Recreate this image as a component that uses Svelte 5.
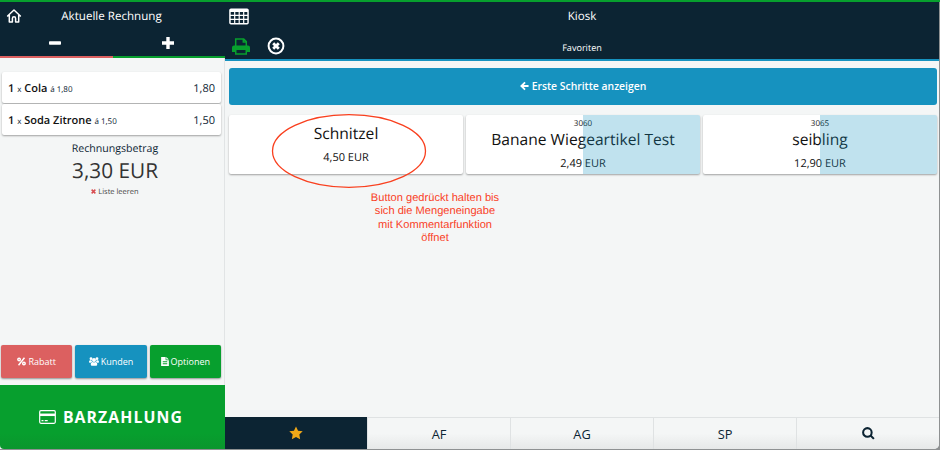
<script lang="ts">
    type Item = { qty: number; name: string; unit: string; total: string };
    type Article = { code?: string; name: string; price: string; weighed: boolean };

    const items: Item[] = [
        { qty: 1, name: "Cola", unit: "1,80", total: "1,80" },
        { qty: 1, name: "Soda Zitrone", unit: "1,50", total: "1,50" },
    ];

    const articles: Article[] = [
        { name: "Schnitzel", price: "4,50 EUR", weighed: false },
        { code: "3060", name: "Banane Wiegeartikel Test", price: "2,49 EUR", weighed: true },
        { code: "3065", name: "seibling", price: "12,90 EUR", weighed: true },
    ];

    const groups = ["AF", "AG", "SP"];
    let active = $state("fav");
</script>

<div class="app">
    <aside>
        <header class="bill-head">
            <div class="title-row">
                <svg class="home" viewBox="0 0 16 16" width="16" height="16">
                    <path d="M1.600 8 8 2l6.400 6M3.300 7v7h3.100v-3.600a1.600 1.600 0 0 1 3.200 0V14h3.100V7" />
                </svg>
                <h1>Aktuelle Rechnung</h1>
            </div>
            <div class="steps">
                <button class="minus" aria-label="Weniger">
                    <svg viewBox="0 0 12 12" width="12" height="12"><rect y="4.200" width="12" height="3.600" rx=".8" /></svg>
                </button>
                <button class="plus" aria-label="Mehr">
                    <svg viewBox="0 0 12 12" width="12" height="12"><path d="M4.300 0h3.400v4.300H12v3.400H7.700V12H4.300V7.700H0V4.300h4.300z" /></svg>
                </button>
            </div>
        </header>

        <ul class="items">
            {#each items as item}
                <li>
                    <span><b>{item.qty}</b> <small>x</small> <b>{item.name}</b> <small>á {item.unit}</small></span>
                    <span class="total">{item.total}</span>
                </li>
            {/each}
        </ul>

        <div class="sum">
            <div class="sum-label">Rechnungsbetrag</div>
            <div class="sum-value">3,30 EUR</div>
            <div class="clear">
                <svg viewBox="0 0 8 8" width="5" height="5"><path d="m1 1 6 6M7 1 1 7" /></svg>
                Liste leeren
            </div>
        </div>

        <div class="actions">
            <button class="red">
                <svg viewBox="0 0 10 10" width="9" height="9">
                    <g fill="none" stroke="#fff" stroke-width="1.6"><circle cx="2.300" cy="2.700" r="1.400" /><circle cx="7.700" cy="7.300" r="1.400" /><path d="M8.300.8 1.700 9.200" /></g>
                </svg>
                Rabatt
            </button>
            <button class="blue">
                <svg viewBox="0 0 20 18" width="10" height="9">
                    <circle cx="4" cy="3.400" r="2.800" /><circle cx="16" cy="3.400" r="2.800" /><circle cx="10" cy="6" r="4" />
                    <path d="M0 10.500C0 8 .8 6.300 2.300 6.300h2.400c.5 1.500 1.200 2.300 2 3-2 .2-2.400 1-3 2H1.500Q0 11.300 0 10.500zM20 10.500C20 8 19.200 6.300 17.700 6.300h-2.400c-.5 1.500-1.200 2.300-2 3 2 .2 2.400 1 3 2h2.200q1.500 0 1.500-.8zM3.500 14.500C3.500 12 5 10 7 10q3 1.500 6 0c2 0 3.500 2 3.500 4.500q0 3-2.500 3H6q-2.500 0-2.500-3z" />
                </svg>
                Kunden
            </button>
            <button class="green">
                <svg viewBox="0 0 12 14" width="8" height="9">
                    <path fill-rule="evenodd" d="M0 0h7v5h5v9H0zM8 0l4 4H8zM2.500 6.800v1.300h7V6.800zm0 3v1.300h7V9.800z" />
                </svg>
                Optionen
            </button>
        </div>

        <button class="pay">
            <svg viewBox="0 0 17 14" width="17" height="14">
                <rect x=".7" y=".7" width="15.600" height="12.600" rx="1.200" />
                <path class="stripe" d="M1 4.800h15" /><path d="M2.500 10.700h2M5.700 10.700h3" />
            </svg>
            BARZAHLUNG
        </button>
    </aside>

    <main>
        <header class="shop-head">
            <div class="shop-row">
                <svg class="grid-icon" viewBox="0 0 20 17" width="20" height="17">
                    <path fill-rule="evenodd" d="M2 .5h16a1.800 1.800 0 0 1 1.800 1.800v12.400a1.800 1.800 0 0 1-1.800 1.800H2a1.800 1.800 0 0 1-1.800-1.800V2.300A1.800 1.800 0 0 1 2 .5zM1.700 4v2.700h3.400V4zm4.600 0v2.700h3.300V4zm4.500 0v2.700h3.300V4zm4.500 0v2.700h3V4zM1.700 8v2.700h3.400V8zm4.600 0v2.700h3.300V8zm4.500 0v2.700h3.300V8zm4.500 0v2.700h3V8zM1.700 12v2.900h3.400V12zm4.600 0v2.900h3.300V12zm4.500 0v2.900h3.300V12zm4.500 0v2.900h3V12z" />
                </svg>
                <h1>Kiosk</h1>
            </div>
            <div class="shop-row second">
                <div class="tools">
                    <svg class="printer" viewBox="0 0 18 17" width="18" height="17">
                        <path class="line" d="M3.700 8V1h8l2.600 2.600V8M11.300 1v3h3" />
                        <path fill-rule="evenodd" d="M2 7.500h14a2 2 0 0 1 2 2V14h-3v2.700H3V14H0V9.500a2 2 0 0 1 2-2zM4.500 12v3.200h9V12z" />
                    </svg>
                    <svg class="cancel" viewBox="0 0 18 18" width="18" height="18">
                        <circle cx="9" cy="9" r="7.400" /><path d="m6.200 6.200 5.600 5.600M11.800 6.200l-5.600 5.600" />
                    </svg>
                </div>
                <h2>Favoriten</h2>
            </div>
        </header>

        <section class="content">
            <button class="intro">
                <svg viewBox="0 0 10 10" width="9" height="10"><path d="M9.500 5H1.800M5.600 1 1.500 5l4.100 4" /></svg>
                Erste Schritte anzeigen
            </button>

            <div class="articles">
                {#each articles as article}
                    <div class="article" class:weighed={article.weighed}>
                        {#if article.code}<span class="code">{article.code}</span>{/if}
                        <span class="name">{article.name}</span>
                        <span class="price">{article.price}</span>
                        {#if !article.weighed}
                            <svg class="ring" viewBox="0 0 156 76" width="156" height="76"><ellipse cx="78" cy="38" rx="76.500" ry="36.300" /></svg>
                        {/if}
                    </div>
                {/each}
            </div>

            <p class="note">Button gedrückt halten bis<br />sich die Mengeneingabe<br />mit Kommentarfunktion<br />öffnet</p>
        </section>

        <nav>
            <button class:active={active === "fav"} onclick={() => (active = "fav")} aria-label="Favoriten">
                <svg viewBox="0 0 24 24" width="14" height="14"><path fill="#f0a818" d="m12 .8 3.500 7.300 8 1.100-5.800 5.500 1.400 8L12 18.900l-7.100 3.800 1.400-8L.5 9.200l8-1.100z" /></svg>
            </button>
            {#each groups as group}
                <button class:active={active === group} onclick={() => (active = group)}>{group}</button>
            {/each}
            <button class:active={active === "search"} onclick={() => (active = "search")} aria-label="Suche">
                <svg class="search" viewBox="0 0 14 14" width="13" height="13"><circle cx="5.800" cy="5.800" r="4.600" /><path d="m9.200 9.200 3.600 3.600" /></svg>
            </button>
        </nav>
    </main>
</div>

<style>
    :global(body) {
        margin: 0;
        background: #8e9192;
    }

    .app {
        display: flex;
        box-sizing: border-box;
        width: 940px;
        height: 450px;
        padding: 0 1px 1px 0;
        border-top: 2px solid #079f2e;
        font-family: "Open Sans", sans-serif;
        text-rendering: geometricPrecision;
        color: #0c2433;
        overflow: hidden;
    }

    button {
        padding: 0;
        border: none;
        font-family: inherit;
        color: inherit;
        background: none;
        cursor: pointer;
    }

    h1,
    h2 {
        margin: 0;
        padding-top: 2px;
        font-weight: 400;
        font-size: 11.6px;
        line-height: 16px;
        color: #fff;
        text-align: center;
    }

    svg {
        flex: none;
        fill: #fff;
    }

    aside {
        box-sizing: border-box;
        width: 225px;
        display: flex;
        flex-direction: column;
        background: #f4f6f6;
        box-shadow: inset -1px 0 #e1e4e5;
    }

    .bill-head {
        height: 56px;
        display: flex;
        flex-direction: column;
        background: #0c2433;
    }

    .title-row {
        height: 28px;
        display: flex;
        align-items: center;
        padding: 0 6px;
    }

    .title-row h1 {
        flex: 1;
        padding-right: 18px;
    }

    .home {
        fill: none;
        stroke: #fff;
        stroke-width: 1.5;
        stroke-linejoin: round;
        stroke-linecap: round;
    }

    .steps {
        flex: 1;
        display: flex;
    }

    .steps button {
        flex: 1;
        padding-right: 2px;
        border-bottom: 2px solid #079f2e;
    }

    .steps svg {
        display: block;
        margin: 0 auto;
    }

    .steps .minus {
        border-color: #dc6060;
    }

    .items {
        list-style: none;
        margin: 14px 4px 0 2px;
        padding: 0;
        display: flex;
        flex-direction: column;
        gap: 1px;
    }

    .items li {
        box-sizing: border-box;
        height: 31px;
        padding: 2px 6px 0;
        display: flex;
        align-items: center;
        justify-content: space-between;
        font-size: 11px;
        background: #fff;
        border-radius: 2px;
        box-shadow: 0 1px 2px rgba(0, 0, 0, 0.35);
    }

    .items b {
        font-weight: 600;
        color: #111;
    }

    .items small {
        font-size: 8px;
    }

    .sum {
        text-align: center;
        padding: 7px 0 0 5px;
    }

    .sum-label {
        font-size: 10.6px;
        line-height: 15px;
    }

    .sum-value {
        font-size: 20.8px;
        line-height: 28px;
        color: #333;
    }

    .clear {
        font-size: 7.5px;
        line-height: 14px;
        color: #444;
    }

    .clear svg {
        stroke: #d84c50;
        stroke-width: 2.4;
    }

    .actions {
        margin-top: auto;
        padding: 0 4px 7px 1px;
        display: flex;
        gap: 3px;
    }

    .actions button {
        flex: 1;
        height: 33px;
        display: flex;
        align-items: center;
        justify-content: center;
        gap: 2px;
        font-size: 9px;
        color: #fff;
        border-radius: 2px;
        box-shadow: 0 1px 2px rgba(0, 0, 0, 0.4);
    }

    .red {
        background: #dc6060;
    }

    .blue {
        background: #1692bf;
    }

    .green {
        background: #079f2e;
    }

    .pay {
        height: 64px;
        display: flex;
        align-items: center;
        justify-content: center;
        gap: 7px;
        padding-right: 3px;
        font-size: 15.8px;
        font-weight: 700;
        letter-spacing: 1.1px;
        color: #fff;
        background: linear-gradient(#079f2e 75%, #0a962d);
        border-radius: 0 0 0 4px;
    }

    .pay svg {
        fill: none;
        stroke: #fff;
        stroke-width: 1.2;
    }

    .pay .stripe {
        stroke-width: 2.5;
    }

    main {
        flex: 1;
        display: flex;
        flex-direction: column;
        background: #f4f6f6;
        border-radius: 0 0 5px 0;
        overflow: hidden;
    }

    .shop-head {
        box-sizing: border-box;
        height: 59px;
        background: #0c2433;
        border-bottom: 2px solid #1692bf;
    }

    .shop-row {
        height: 28px;
        display: grid;
        grid-template-columns: 60px 1fr 60px;
        align-items: center;
    }

    .shop-row.second {
        height: 32px;
    }

    .grid-icon {
        margin-left: 4px;
    }

    .tools {
        display: flex;
        align-items: center;
        gap: 17px;
        padding-left: 7px;
    }

    .printer {
        fill: #079f2e;
    }

    .printer .line {
        fill: none;
        stroke: #079f2e;
        stroke-width: 1.5;
    }

    .cancel {
        fill: none;
        stroke: #fff;
        stroke-width: 2;
    }

    .cancel path {
        stroke-width: 2.8;
    }

    h2 {
        padding-top: 3px;
        font-size: 9.1px;
    }

    .content {
        flex: 1;
        padding: 7px 2px 0 4px;
    }

    .intro {
        width: 100%;
        height: 37px;
        display: flex;
        align-items: center;
        justify-content: center;
        gap: 3px;
        padding-bottom: 1px;
        font-size: 10.4px;
        font-weight: 600;
        color: #fff;
        background: #1692bf;
        border-radius: 3px;
    }

    .intro svg {
        fill: none;
        stroke: #fff;
        stroke-width: 2;
    }

    .articles {
        margin-top: 10px;
        display: grid;
        grid-template-columns: repeat(3, 1fr);
        gap: 3px;
    }

    .article {
        position: relative;
        height: 59px;
        display: flex;
        flex-direction: column;
        align-items: center;
        justify-content: center;
        color: #111;
        background: #fff;
        border-radius: 2px;
        box-shadow: 0 1px 2px rgba(0, 0, 0, 0.35);
    }

    /* articles sold by weight get a tint over their right half */
    .weighed::after {
        content: "";
        position: absolute;
        inset: 0 0 0 50%;
        background: rgba(22, 146, 191, 0.27);
        border-radius: 0 2px 2px 0;
    }

    .code {
        padding-top: 2px;
        font-size: 8px;
        line-height: 10px;
    }

    .name {
        font-size: 15.6px;
        line-height: 21px;
    }

    .price {
        margin-top: 4px;
        font-size: 11px;
        line-height: 19px;
    }

    .ring {
        position: absolute;
        top: -2px;
        left: 42px;
        fill: none;
        stroke: #f9401f;
        stroke-width: 1.3;
    }

    .note {
        width: 140px;
        margin: 18px 0 0 136px;
        font-family: "Liberation Sans", sans-serif;
        font-size: 11.1px;
        line-height: 13.4px;
        text-align: center;
        color: #f9401f;
    }

    nav {
        height: 31px;
        display: flex;
        border-top: 1px solid #dfe2e3;
        background: linear-gradient(#f4f6f6 50%, #e6e8e8);
    }

    nav button {
        flex: 1;
        display: flex;
        align-items: center;
        justify-content: center;
        font-size: 12.8px;
        border-left: 1px solid #dfe2e3;
    }

    nav button:first-child {
        border-left: none;
    }

    nav .active {
        background: #0c2433;
        margin-top: -1px;
    }

    .search {
        fill: none;
        stroke: #0c2433;
        stroke-width: 2.2;
    }
</style>
